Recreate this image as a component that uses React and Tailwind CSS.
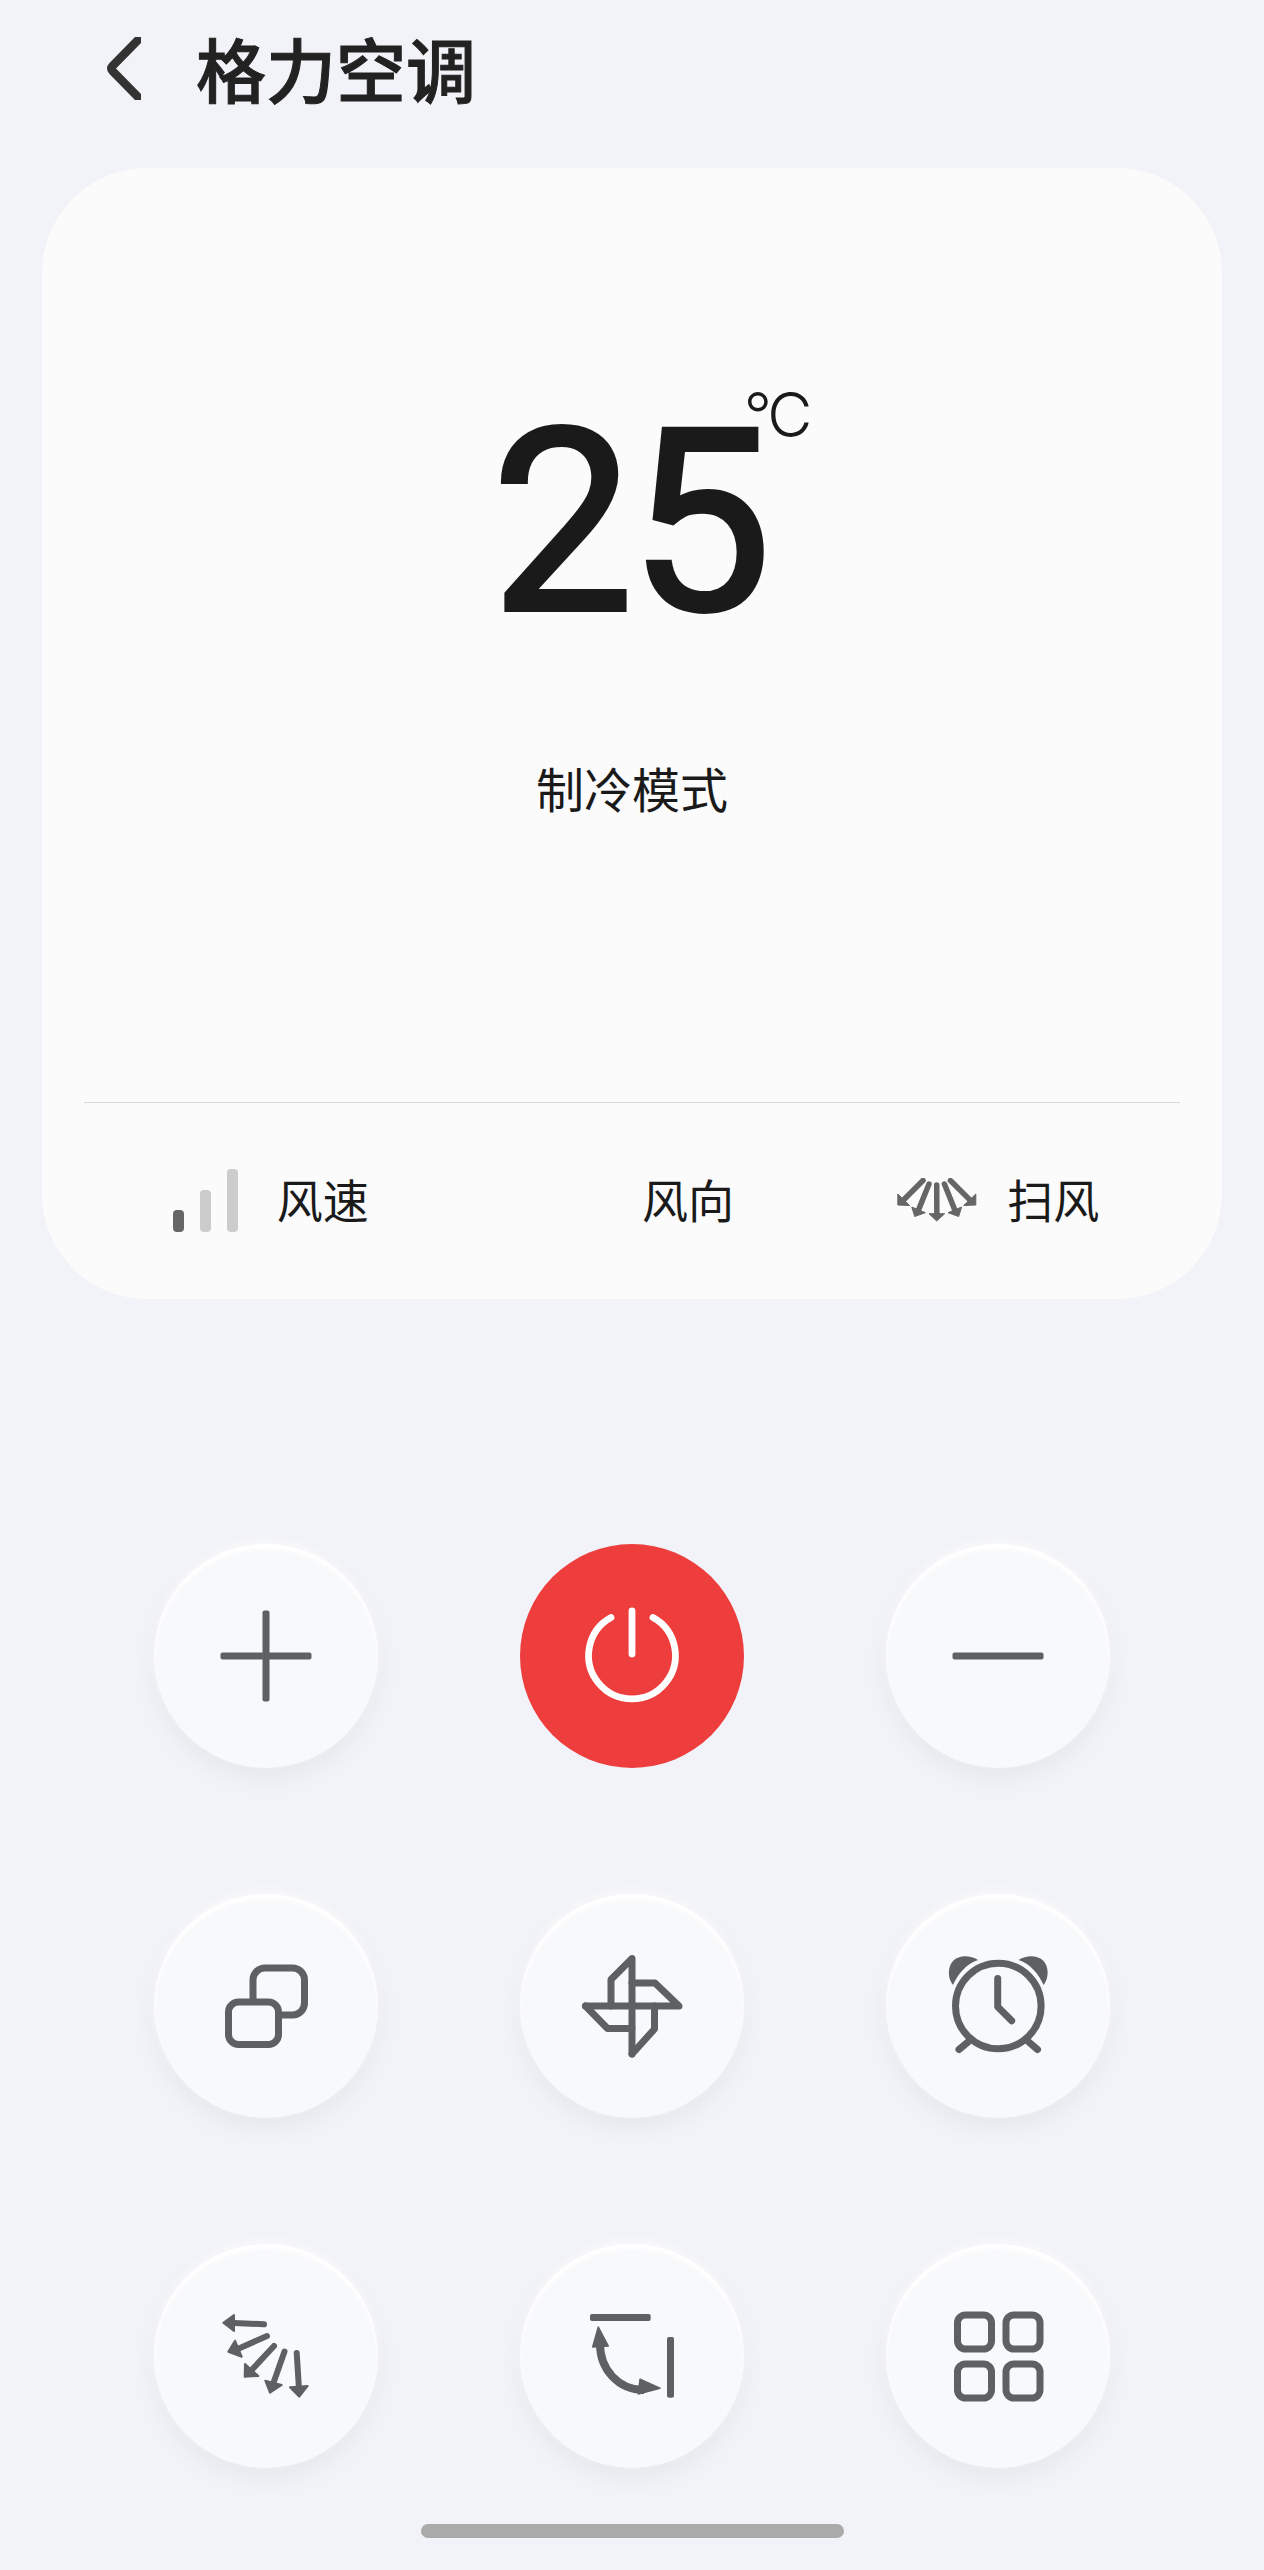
import React from 'react';

const GRAY = '#5f6062';

const Arrow = ({ tail, head, width = 6, color = GRAY, edge = 2 }) => {
  // stem runs from the tail to the middle of the arrow head's base
  const baseX = (head[2] + head[4]) / 2;
  const baseY = (head[3] + head[5]) / 2;
  return (
    <g>
      <line x1={tail[0]} y1={tail[1]} x2={baseX} y2={baseY} stroke={color} strokeWidth={width} strokeLinecap="round" />
      <polygon points={head.join(' ')} fill={color} stroke={color} strokeWidth={edge} strokeLinejoin="round" />
    </g>
  );
};

const IconPlus = () => (
  <>
    <rect x="66.5" y="108.5" width="91" height="7" rx="2" fill={GRAY} />
    <rect x="108.5" y="66.5" width="7" height="91" rx="2" fill={GRAY} />
  </>
);

const IconMinus = () => <rect x="66.5" y="108.5" width="91" height="7" rx="2" fill={GRAY} />;

const IconPower = () => (
  <g fill="none" stroke="#ffffff" strokeWidth="6.8" strokeLinecap="round">
    <path d="M91 73.5A43.4 43.4 0 1 0 133 73.5" />
    <path d="M112 67V110" />
  </g>
);

const IconCopy = () => (
  <g fill="none" stroke={GRAY} strokeWidth="7" strokeLinejoin="round">
    <rect x="74.5" y="108" width="50" height="42.5" rx="10" />
    <path d="M99 108V86A12 12 0 0 1 111 74H138.5A12 12 0 0 1 150.5 86V109A12 12 0 0 1 138.5 121H124.5" />
  </g>
);

const IconFan = () => (
  <g fill="none" stroke={GRAY} strokeWidth="7" strokeLinejoin="round" strokeLinecap="round">
    <path d="M112 160V64.5L91 85.5V112" />
    <path d="M65.5 112H159L135 89H112" />
    <path d="M65.5 112L87.5 134.5H112" />
    <path d="M134.5 112V135L112 160" />
  </g>
);

const IconAlarm = () => (
  <g>
    <circle cx="112.3" cy="112" r="42.8" fill="none" stroke={GRAY} strokeWidth="7" />
    <path d="M111.7 84.5V112.7L125.7 126.7" fill="none" stroke={GRAY} strokeWidth="7" strokeLinecap="round" strokeLinejoin="round" />
    <path d="M82.3 147.7L73 155.5M142.3 147.7L151.5 155.5" fill="none" stroke={GRAY} strokeWidth="7" strokeLinecap="round" />
    <path d="M67 91C61.5 84 61.5 73 67 67C73 61 84 61 92 66C80 70 72 80 67 91Z" fill={GRAY} />
    <path d="M157.6 91C163 84 163 73 157.6 67C151.6 61 140.6 61 132.6 66C144.6 70 152.6 80 157.6 91Z" fill={GRAY} />
  </g>
);

const IconSwingSide = () => (
  <g>
    <Arrow tail={[110, 80.3]} head={[69.3, 78.7, 80, 71, 80, 87]} />
    <Arrow tail={[113, 92]} head={[74.3, 107.7, 81, 96.7, 87.7, 112.7]} />
    <Arrow tail={[120, 102]} head={[90.7, 132.7, 91, 120, 104.3, 132]} />
    <Arrow tail={[130.5, 107.5]} head={[116, 148.7, 111.3, 136.7, 127.7, 141]} />
    <Arrow tail={[142.7, 109]} head={[145.3, 152.7, 136, 143.3, 153.7, 142]} />
  </g>
);

const IconRange = () => (
  <g fill={GRAY}>
    <rect x="70" y="70" width="60.7" height="7" rx="2" />
    <rect x="147" y="93" width="7" height="60.7" rx="2" />
    <path d="M80 100C80 125 98 146 124 146" fill="none" stroke={GRAY} strokeWidth="8" />
    <polygon points="78.3,83 72.7,103 88.3,102" stroke={GRAY} strokeWidth="1.5" strokeLinejoin="round" />
    <polygon points="140,144.3 120,135.3 118.3,150" stroke={GRAY} strokeWidth="1.5" strokeLinejoin="round" />
  </g>
);

const IconGrid = () => (
  <g fill="none" stroke={GRAY} strokeWidth="7">
    <rect x="71.5" y="71" width="34" height="34" rx="8" />
    <rect x="120" y="71" width="34" height="34" rx="8" />
    <rect x="71.5" y="120" width="34" height="34" rx="8" />
    <rect x="120" y="120" width="34" height="34" rx="8" />
  </g>
);

const RoundButton = ({ children, active }) => (
  <button
    className={
      active
        ? 'w-[224px] h-[224px] rounded-full bg-[#ed3d3c]'
        : 'w-[224px] h-[224px] rounded-full bg-[#f8f9fb] shadow-[inset_0_5px_4px_#ffffff,0_10px_24px_rgba(0,0,0,0.05),0_-3px_10px_rgba(255,255,255,0.8)]'
    }
  >
    <svg viewBox="0 0 224 224" className="w-[224px] h-[224px]">{children}</svg>
  </button>
);

const SpeedIcon = () => (
  <div className="w-[80px] pl-[1px] flex justify-center items-end gap-[16px] h-[63px]">
    <div className="w-[11px] h-[22px] rounded-[4px] bg-[#666666]" />
    <div className="w-[11px] h-[42px] rounded-[4px] bg-[#cccccc]" />
    <div className="w-[11px] h-[63px] rounded-[4px] bg-[#cccccc]" />
  </div>
);

const SweepIcon = () => (
  <svg viewBox="0 0 80 44" className="w-[80px] h-[44px] ml-[2px]">
    <Arrow color="#666666" width={5.5} edge={1} tail={[26, 2.5]} head={[0.8, 27, 0.8, 16, 12.7, 27.5]} />
    <Arrow color="#666666" width={5.5} edge={1} tail={[32, 6]} head={[17.7, 38.5, 14.8, 29, 28.3, 34.7]} />
    <Arrow color="#666666" width={5.5} edge={1} tail={[39.7, 7]} head={[39.7, 43, 32, 35.7, 47.7, 35.7]} />
    <Arrow color="#666666" width={5.5} edge={1} tail={[47.4, 6]} head={[61.7, 38.5, 64.6, 29, 51, 34.7]} />
    <Arrow color="#666666" width={5.5} edge={1} tail={[53.4, 2.5]} head={[78.8, 27, 78.8, 16, 66.7, 27.5]} />
  </svg>
);

const App = () => {
  return (
    <div className="h-[2570px] overflow-hidden bg-[#f2f3f8] font-['Noto_Sans_CJK_SC',sans-serif]">
      {/* top bar */}
      <div className="h-[168px] pl-[107px] pb-[32px] flex items-center">
        <svg viewBox="0 0 34 63" className="w-[34px] h-[63px]">
          <path d="M31 3L5.5 29Q3 31.5 5.5 34L31 60" fill="none" stroke="#333333" strokeWidth="8.5" strokeLinecap="round" strokeLinejoin="round" />
        </svg>
        <h1 className="ml-[55px] text-[70px] leading-none font-medium [-webkit-text-stroke:1px_#222222] text-[#222222]">格力空调</h1>
      </div>

      {/* temperature card */}
      <div className="mx-[42px] h-[1131px] rounded-[105px] bg-[#fbfbfb] flex flex-col">
        <div className="h-[934px] flex flex-col items-center pt-[227px]">
          <div className="relative mr-[6px]">
            <div className="font-['Roboto'] font-normal text-[254px] leading-[256px] tracking-[-5px] [-webkit-text-stroke:4px_#1a1a1a] text-[#1a1a1a]">25</div>
            <span className="absolute top-[-11px] left-full -ml-[23px] font-['Inter'] font-light text-[62px] leading-none tracking-[-4px] text-[#1a1a1a]">°C</span>
          </div>
          <div className="mt-[112px] text-[48px] leading-none text-[#1a1a1a]">制冷模式</div>
        </div>
        <div className="mx-[42px] h-px bg-[#d8d8d8]" />
        <div className="mx-[42px] flex-1 grid grid-cols-3 items-center pb-[2px]">
          <div className="flex items-center justify-center gap-[32px]">
            <SpeedIcon />
            <span className="mb-[4px] text-[46px] leading-none text-[#1a1a1a]">风速</span>
          </div>
          <div className="flex items-center justify-center gap-[32px]">
            <div className="w-[80px]" />
            <span className="mb-[4px] text-[46px] leading-none text-[#1a1a1a]">风向</span>
          </div>
          <div className="flex items-center justify-center gap-[30px]">
            <SweepIcon />
            <span className="mb-[4px] text-[46px] leading-none text-[#1a1a1a]">扫风</span>
          </div>
        </div>
      </div>

      {/* remote buttons */}
      <div className="mt-[245px] px-[154px] grid grid-cols-[224px_224px_224px] justify-between gap-y-[126px]">
        <RoundButton><IconPlus /></RoundButton>
        <RoundButton active><IconPower /></RoundButton>
        <RoundButton><IconMinus /></RoundButton>
        <RoundButton><IconCopy /></RoundButton>
        <RoundButton><IconFan /></RoundButton>
        <RoundButton><IconAlarm /></RoundButton>
        <RoundButton><IconSwingSide /></RoundButton>
        <RoundButton><IconRange /></RoundButton>
        <RoundButton><IconGrid /></RoundButton>
      </div>

      {/* home indicator */}
      <div className="mt-[56px] mx-auto w-[423px] h-[14px] rounded-full bg-[#a9aaa9]" />
    </div>
  );
};

export default App;
